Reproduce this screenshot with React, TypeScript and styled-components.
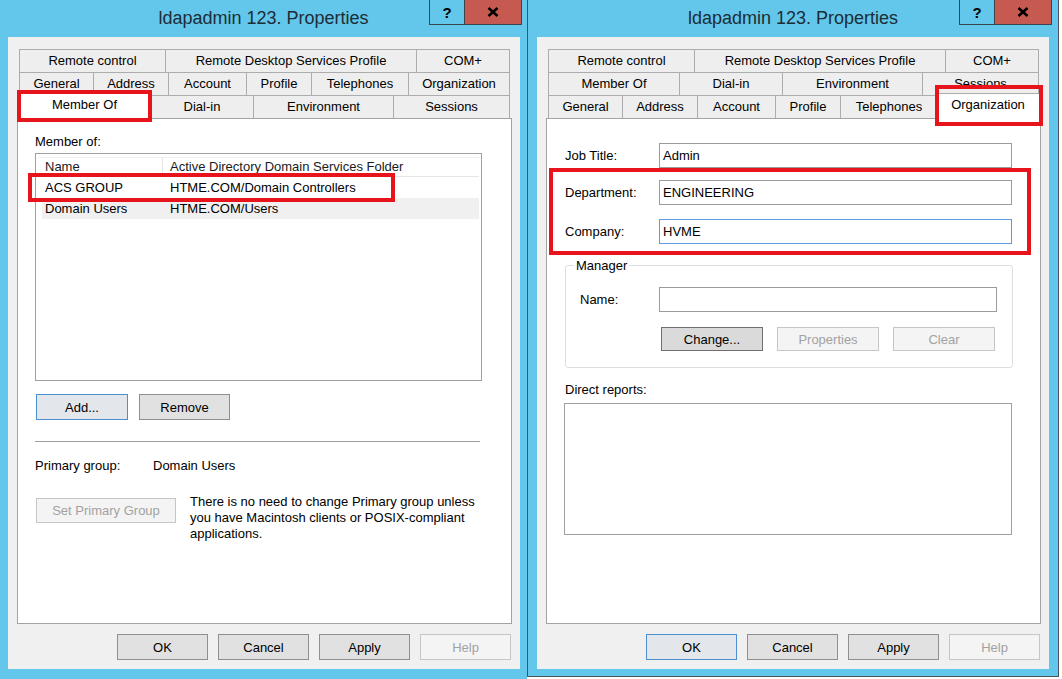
import React from 'react';
import styled, { createGlobalStyle, css } from 'styled-components';

const GlobalStyle = createGlobalStyle`
  html, body { margin: 0; padding: 0; background: #ffffff; }
  body { font-family: "Liberation Sans", Arial, sans-serif; font-size: 13px; color: #000; }
  * { box-sizing: border-box; }
`;

const Page = styled.div`
  display: flex;
  align-items: flex-start;
  width: 1062px;
  height: 679px;
  overflow: hidden;
`;

const Frame = styled.div<{ $w: number; $h: number; $bordered?: boolean }>`
  width: ${(p) => p.$w}px;
  height: ${(p) => p.$h}px;
  flex: none;
  background: #62c7eb;
  display: flex;
  flex-direction: column;
  ${(p) =>
    p.$bordered &&
    css`
      border: 1px solid #4b5359;
      border-top: none;
    `}
`;

const TitleBar = styled.div`
  height: 37px;
  flex: none;
  display: grid;
  grid-template-columns: 1fr auto 1fr;
`;

const Title = styled.div`
  grid-column: 2;
  font-size: 18px;
  line-height: 36px;
  color: #1d2d35;
  white-space: nowrap;
`;

const Caption = styled.div<{ $mr: number }>`
  grid-column: 3;
  justify-self: end;
  align-self: start;
  display: flex;
  margin-right: ${(p) => p.$mr}px;
`;

const CaptionBtn = styled.div<{ $w: number; $close?: boolean }>`
  width: ${(p) => p.$w}px;
  height: 25px;
  border: 1px solid #3b464c;
  border-top: none;
  background: ${(p) => (p.$close ? '#c75a50' : '#62c7eb')};
  display: flex;
  align-items: center;
  justify-content: center;
  font-weight: bold;
  font-size: 15px;
  color: #000;
  ${(p) => p.$close && css`margin-left: -1px;`}
`;

const Client = styled.div<{ $ml: number }>`
  width: 512px;
  height: 632px;
  flex: none;
  margin-left: ${(p) => p.$ml}px;
  background: #f0f0f0;
  padding: 12px 8px 0 9px;
  display: flex;
  flex-direction: column;
`;

const TabStrip = styled.div`
  display: flex;
  flex-direction: column;
`;

const TabRow = styled.div`
  display: flex;
  height: 23px;
  margin: 0 2px;
`;

const Tab = styled.div<{ $w: number; $selected?: boolean; $last?: boolean }>`
  width: ${(p) => (p.$selected ? p.$w + 4 : p.$w)}px;
  flex: none;
  border: 1px solid #acacac;
  border-bottom: none;
  ${(p) => !p.$last && !p.$selected && css`border-right: none;`}
  background: ${(p) => (p.$selected ? '#ffffff' : '#eeeeee')};
  display: flex;
  align-items: center;
  justify-content: center;
  white-space: nowrap;
  color: #000;
  padding-bottom: 1px;
  ${(p) =>
    p.$selected &&
    css`
      margin: -2px -2px -1px -2px;
      position: relative;
      z-index: 2;
      padding-bottom: 5px;
    `}
`;

const Highlight = styled.div<{ $t: number; $l: number; $w: number; $h: number }>`
  position: absolute;
  top: ${(p) => p.$t}px;
  left: ${(p) => p.$l}px;
  width: ${(p) => p.$w}px;
  height: ${(p) => p.$h}px;
  border: 4px solid #e8141c;
  pointer-events: none;
  z-index: 5;
`;

const Panel = styled.div`
  height: 506px;
  flex: none;
  background: #ffffff;
  border: 1px solid #a3a3a3;
  position: relative;
  z-index: 1;
`;

const Footer = styled.div`
  display: flex;
  justify-content: flex-end;
  gap: 10px;
  margin-top: 10px;
  padding-right: 1px;
`;

type BtnKind = 'normal' | 'focus' | 'disabled' | 'pressed';

const Button = styled.div<{ $w: number; $h: number; $kind?: BtnKind }>`
  width: ${(p) => p.$w}px;
  height: ${(p) => p.$h}px;
  flex: none;
  display: flex;
  align-items: center;
  justify-content: center;
  white-space: nowrap;
  font-size: 13px;
  border: 1px solid #8f8f8f;
  background: #e1e1e1;
  color: #000;
  ${(p) =>
    p.$kind === 'focus' &&
    css`
      border-color: #4a8fd0;
      background: #e3e6ea;
    `}
  ${(p) =>
    p.$kind === 'pressed' &&
    css`
      border-color: #6f6f6f;
      background: #dadada;
    `}
  ${(p) =>
    p.$kind === 'disabled' &&
    css`
      border-color: #c6c6c6;
      background: #f4f4f4;
      color: #a2a2a2;
    `}
`;

/* ---------- Member Of panel ---------- */

const MemberBody = styled.div`
  padding: 15px 0 0 17px;
  display: flex;
  flex-direction: column;
`;

const Label = styled.div`
  line-height: 15px;
  white-space: nowrap;
`;

const ListBox = styled.div<{ $w: number; $h: number; $mt: number; $ml?: number }>`
  width: ${(p) => p.$w}px;
  height: ${(p) => p.$h}px;
  margin-top: ${(p) => p.$mt}px;
  margin-left: ${(p) => p.$ml ?? 0}px;
  border: 1px solid #a0a0a0;
  background: #ffffff;
  padding: 3px 2px 0 2px;
`;

const ListHeader = styled.div`
  display: grid;
  grid-template-columns: 125px 1fr;
  height: 20px;
  border-top: 1px solid #f0f0f0;
  border-bottom: 1px solid #e5e5e5;
`;

const HeaderCell = styled.div<{ $divider?: boolean }>`
  padding-left: 7px;
  line-height: 18px;
  white-space: nowrap;
  color: #1a1a1a;
  ${(p) => p.$divider && css`border-right: 1px solid #e5e5e5;`}
`;

const ListRow = styled.div<{ $shade?: boolean }>`
  display: grid;
  grid-template-columns: 125px 1fr;
  height: 21px;
  line-height: 21px;
  position: relative;
  ${(p) =>
    p.$shade &&
    css`
      background: #f0f0f0;
      margin-left: 4px;
      grid-template-columns: 121px 1fr;
    `}
`;

const Cell = styled.div<{ $shift?: boolean }>`
  padding-left: ${(p) => (p.$shift ? 3 : 7)}px;
  white-space: nowrap;
`;

const ButtonRow = styled.div<{ $mt: number; $gap: number; $pl: number }>`
  display: flex;
  gap: ${(p) => p.$gap}px;
  margin-top: ${(p) => p.$mt}px;
  padding-left: ${(p) => p.$pl}px;
`;

const Separator = styled.div`
  width: 445px;
  margin-top: 21px;
  border-top: 1px solid #a0a0a0;
`;

const InfoRow = styled.div`
  display: flex;
  margin-top: 16px;
  line-height: 15px;
  white-space: nowrap;
`;

const InfoLabel = styled.div`
  width: 118px;
`;

const SetRow = styled.div`
  display: flex;
  align-items: flex-start;
  margin-top: 21px;
  padding-left: 1px;
`;

const SetButtonWrap = styled.div`
  margin-top: 4px;
`;

const Note = styled.div`
  margin-left: 14px;
  line-height: 16px;
  white-space: nowrap;
`;

/* ---------- Organization panel ---------- */

const OrgBody = styled.div`
  padding: 24px 0 0 18px;
  display: flex;
  flex-direction: column;
`;

const FieldRow = styled.div<{ $label: number; $input: number }>`
  display: grid;
  grid-template-columns: ${(p) => p.$label}px ${(p) => p.$input}px;
  align-items: center;
  height: 25px;
`;

const TextBox = styled.div<{ $focus?: boolean }>`
  height: 25px;
  border: 1px solid ${(p) => (p.$focus ? '#569de5' : '#9b9b9b')};
  padding-left: 3px;
  line-height: 23px;
  white-space: nowrap;
  background: #ffffff;
`;

const HighlightGroup = styled.div`
  position: relative;
  display: flex;
  flex-direction: column;
  gap: 14px;
  margin-top: 12px;
`;

const Group = styled.fieldset`
  margin: 14px 0 0 0;
  padding: 0;
  width: 448px;
  min-width: 0;
  border: 1px solid #d9dfe3;
  border-radius: 3px;
`;

const Legend = styled.legend`
  margin-left: 8px;
  padding: 0 2px;
  line-height: 15px;
`;

const GroupInner = styled.div`
  padding: 14px 0 16px 14px;
  display: flex;
  flex-direction: column;
`;

const SectionLabel = styled(Label)`
  margin-top: 14px;
`;

/* ---------- data ---------- */

type TabDef = {
  label: string;
  w: number;
  selected?: boolean;
  hl?: { t: number; l: number; w: number; h: number };
};

const rowRemote: TabDef[] = [
  { label: 'Remote control', w: 146 },
  { label: 'Remote Desktop Services Profile', w: 251 },
  { label: 'COM+', w: 94 },
];

const rowGeneral = (sel: boolean): TabDef[] => [
  { label: 'General', w: 74 },
  { label: 'Address', w: 75 },
  { label: 'Account', w: 78 },
  { label: 'Profile', w: 65 },
  { label: 'Telephones', w: 97 },
  sel
    ? { label: 'Organization', w: 102, selected: true, hl: { t: -9, l: -1, w: 108, h: 41 } }
    : { label: 'Organization', w: 102 },
];

const rowMember = (sel: boolean): TabDef[] => [
  sel
    ? { label: 'Member Of', w: 131, selected: true, hl: { t: -4, l: -1, w: 135, h: 32 } }
    : { label: 'Member Of', w: 131 },
  { label: 'Dial-in', w: 103 },
  { label: 'Environment', w: 140 },
  { label: 'Sessions', w: 117 },
];

const CloseGlyph = () => (
  <svg width="12" height="10" viewBox="0 0 12 10">
    <path d="M1.5 1 L10.5 9 M10.5 1 L1.5 9" stroke="#000" strokeWidth="2.6" strokeLinecap="butt" />
  </svg>
);

type WindowProps = {
  w: number;
  h: number;
  bordered?: boolean;
  ml: number;
  captionMr: number;
  rows: TabDef[][];
  okKind: BtnKind;
  children: React.ReactNode;
};

function Window({ w, h, bordered, ml, captionMr, rows, okKind, children }: WindowProps) {
  return (
    <Frame $w={w} $h={h} $bordered={bordered}>
      <TitleBar>
        <Title>ldapadmin 123. Properties</Title>
        <Caption $mr={captionMr}>
          <CaptionBtn $w={36}>?</CaptionBtn>
          <CaptionBtn $w={58} $close>
            <CloseGlyph />
          </CaptionBtn>
        </Caption>
      </TitleBar>
      <Client $ml={ml}>
        <TabStrip>
          {rows.map((row, ri) => (
            <TabRow key={ri}>
              {row.map((t, ti) => (
                <Tab key={t.label} $w={t.w} $selected={t.selected} $last={ti === row.length - 1}>
                  {t.label}
                  {t.hl && <Highlight $t={t.hl.t} $l={t.hl.l} $w={t.hl.w} $h={t.hl.h} />}
                </Tab>
              ))}
            </TabRow>
          ))}
        </TabStrip>
        <Panel>{children}</Panel>
        <Footer>
          <Button $w={91} $h={26} $kind={okKind}>OK</Button>
          <Button $w={91} $h={26}>Cancel</Button>
          <Button $w={91} $h={26}>Apply</Button>
          <Button $w={91} $h={26} $kind="disabled">Help</Button>
        </Footer>
      </Client>
    </Frame>
  );
}

const members = [
  { name: 'ACS GROUP', folder: 'HTME.COM/Domain Controllers', hl: true },
  { name: 'Domain Users', folder: 'HTME.COM/Users', shade: true },
];

export default function App() {
  return (
    <>
      <GlobalStyle />
      <Page>
        <Window
          w={527}
          h={679}
          ml={8}
          captionMr={5}
          rows={[rowRemote, rowGeneral(false), rowMember(true)]}
          okKind="normal"
        >
          <MemberBody>
            <Label>Member of:</Label>
            <ListBox $w={447} $h={228} $mt={4}>
              <ListHeader>
                <HeaderCell $divider>Name</HeaderCell>
                <HeaderCell>Active Directory Domain Services Folder</HeaderCell>
              </ListHeader>
              {members.map((m) => (
                <ListRow key={m.name} $shade={m.shade}>
                  <Cell $shift={m.shade}>{m.name}</Cell>
                  <Cell>{m.folder}</Cell>
                  {m.hl && <Highlight $t={-4} $l={-10} $w={367} $h={29} />}
                </ListRow>
              ))}
            </ListBox>
            <ButtonRow $mt={13} $gap={11} $pl={1}>
              <Button $w={92} $h={26} $kind="focus">Add...</Button>
              <Button $w={91} $h={26}>Remove</Button>
            </ButtonRow>
            <Separator />
            <InfoRow>
              <InfoLabel>Primary group:</InfoLabel>
              <div>Domain Users</div>
            </InfoRow>
            <SetRow>
              <SetButtonWrap>
                <Button $w={140} $h={25} $kind="disabled">Set Primary Group</Button>
              </SetButtonWrap>
              <Note>
                There is no need to change Primary group unless
                <br />
                you have Macintosh clients or POSIX-compliant
                <br />
                applications.
              </Note>
            </SetRow>
          </MemberBody>
        </Window>

        <Window
          w={532}
          h={677}
          bordered
          ml={9}
          captionMr={6}
          rows={[rowRemote, rowMember(false), rowGeneral(true)]}
          okKind="focus"
        >
          <OrgBody>
            <FieldRow $label={94} $input={353}>
              <Label>Job Title:</Label>
              <TextBox>Admin</TextBox>
            </FieldRow>
            <HighlightGroup>
              <FieldRow $label={94} $input={353}>
                <Label>Department:</Label>
                <TextBox>ENGINEERING</TextBox>
              </FieldRow>
              <FieldRow $label={94} $input={353}>
                <Label>Company:</Label>
                <TextBox $focus>HVME</TextBox>
              </FieldRow>
              <Highlight $t={-12} $l={-16} $w={482} $h={87} />
            </HighlightGroup>
            <Group>
              <Legend>Manager</Legend>
              <GroupInner>
                <FieldRow $label={79} $input={338}>
                  <Label>Name:</Label>
                  <TextBox />
                </FieldRow>
                <ButtonRow $mt={15} $gap={14} $pl={81}>
                  <Button $w={102} $h={24} $kind="pressed">Change...</Button>
                  <Button $w={102} $h={24} $kind="disabled">Properties</Button>
                  <Button $w={102} $h={24} $kind="disabled">Clear</Button>
                </ButtonRow>
              </GroupInner>
            </Group>
            <SectionLabel>Direct reports:</SectionLabel>
            <ListBox $w={448} $h={132} $mt={6} $ml={-1} />
          </OrgBody>
        </Window>
      </Page>
    </>
  );
}
